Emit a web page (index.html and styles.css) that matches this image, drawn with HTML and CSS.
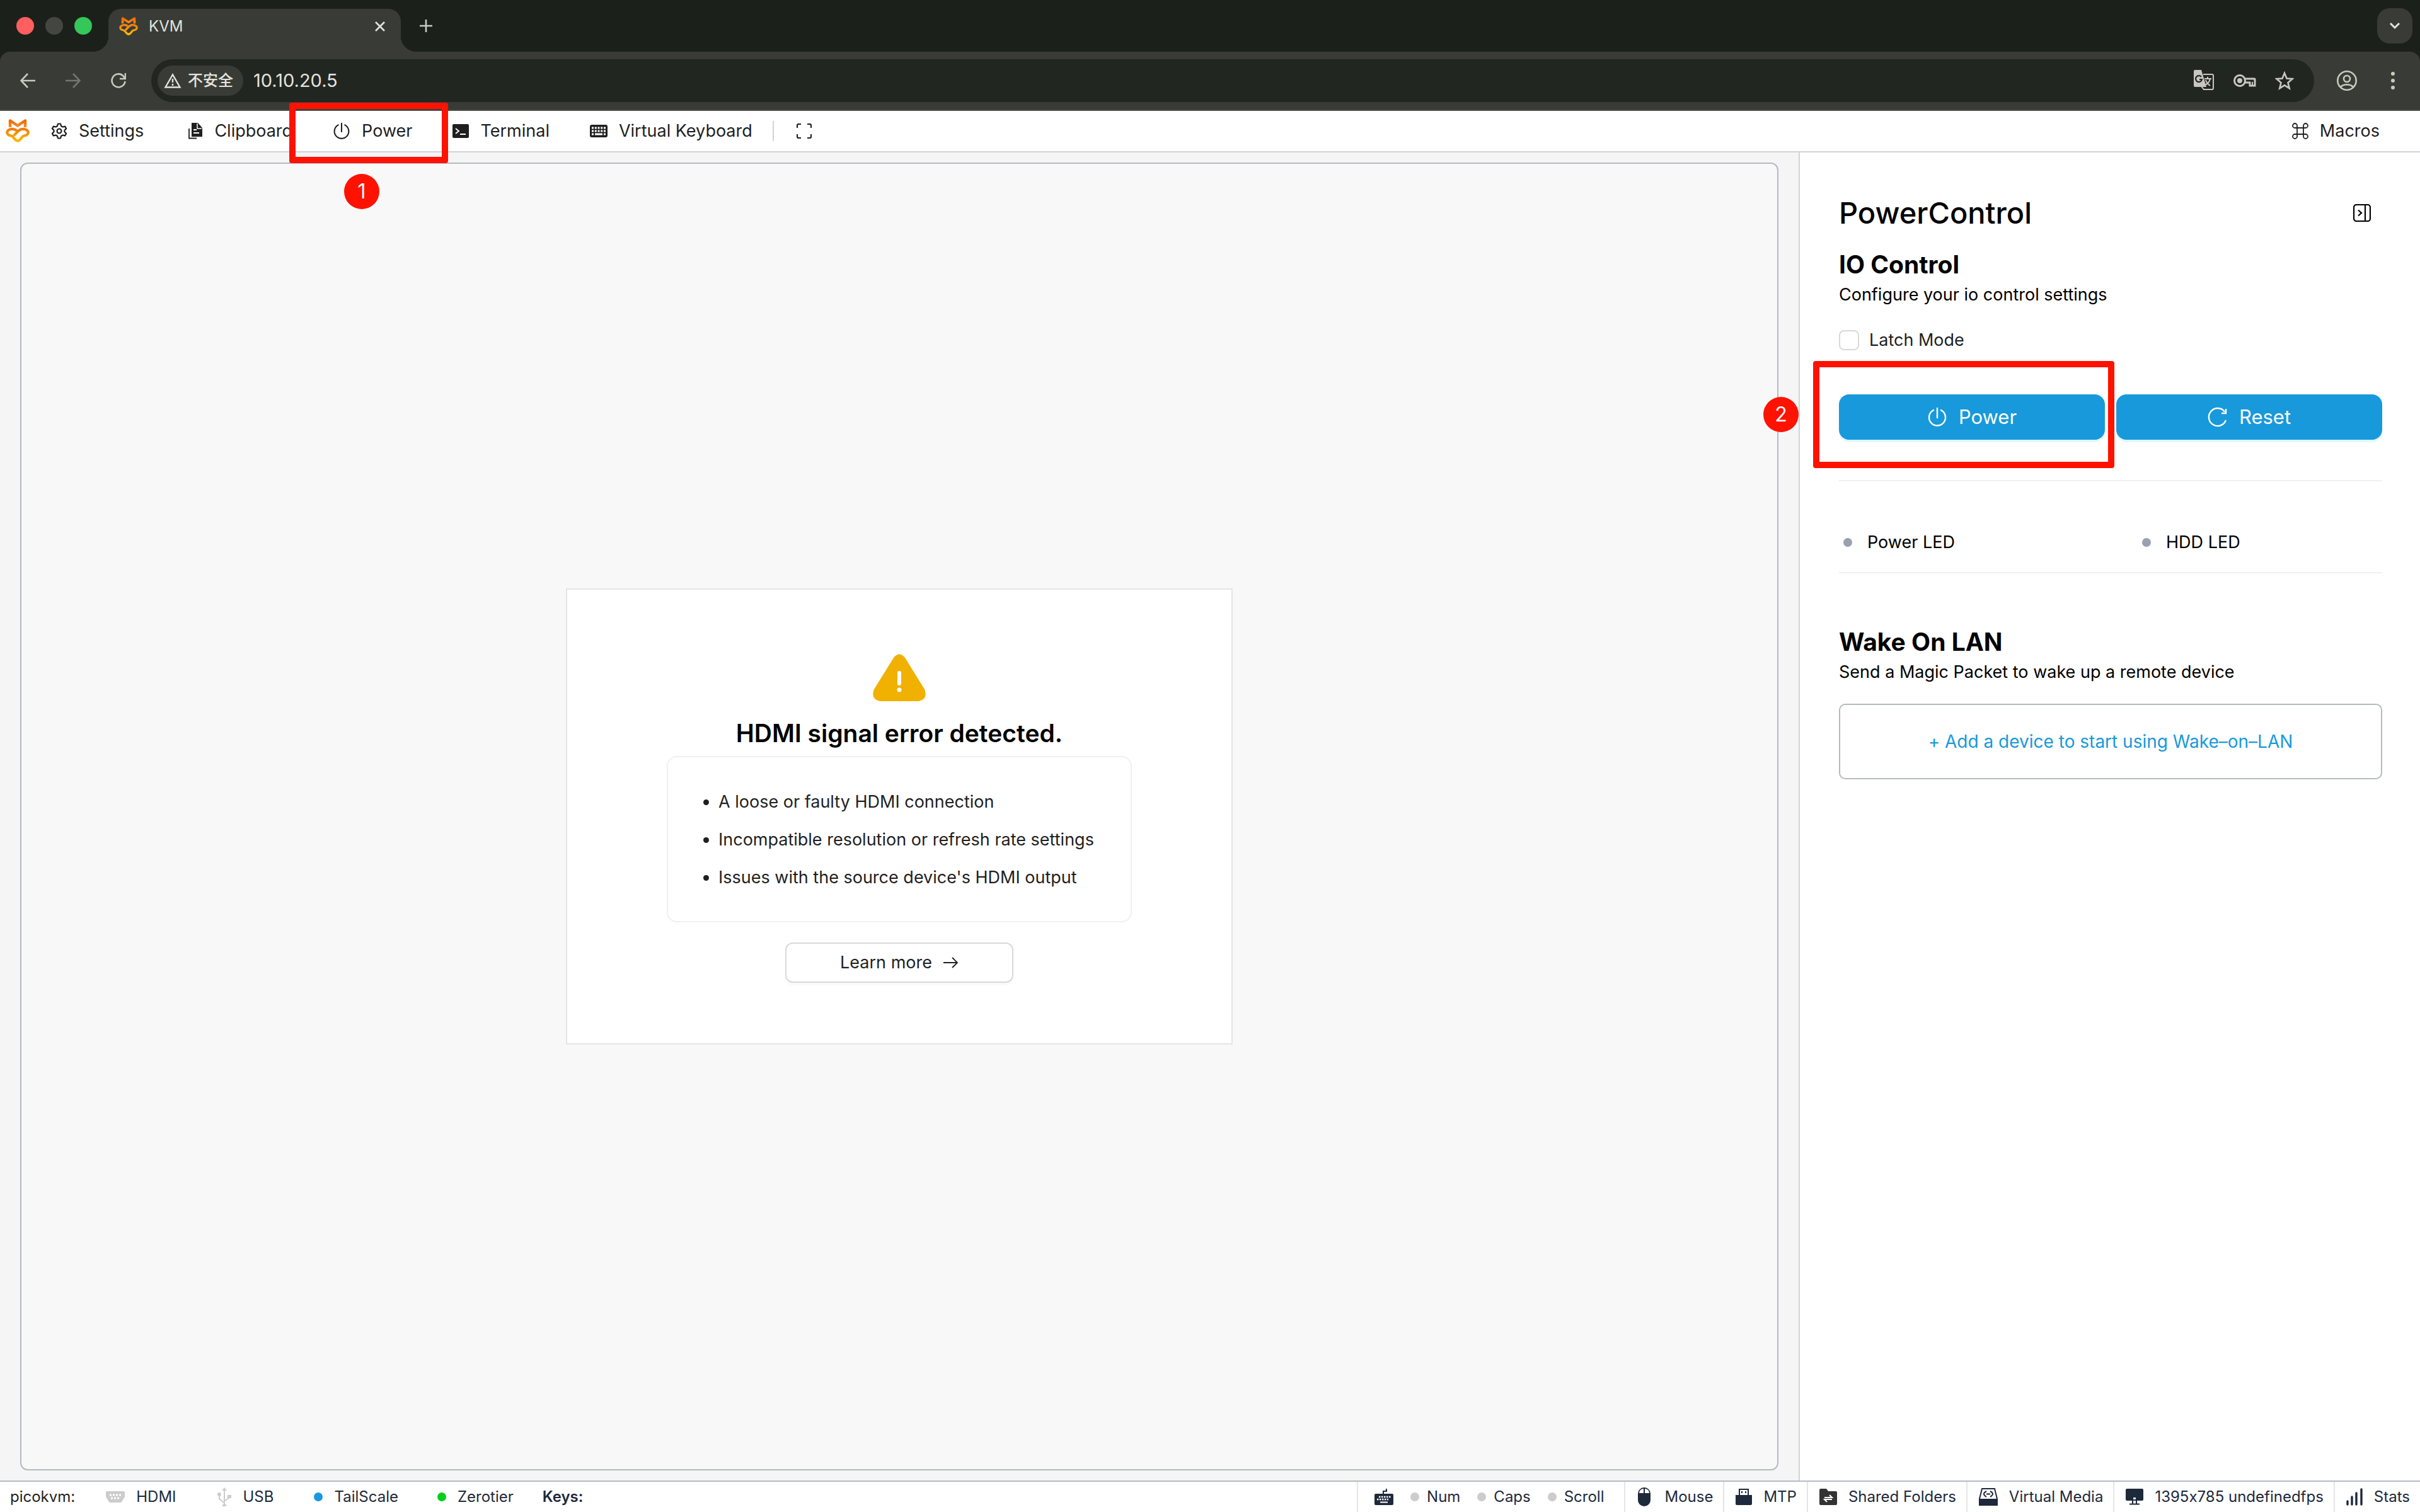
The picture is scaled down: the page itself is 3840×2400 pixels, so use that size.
FILE: index.html
```html
<!DOCTYPE html>
<html lang="en">
<head>
	<meta charset="utf-8">
	<title>KVM</title>
	<link rel="stylesheet" href="styles.css">
</head>

<body>

<!-- shared icons -->
<svg class="sprite" aria-hidden="true">
	<defs>
		<linearGradient id="fox" x1="0" y1="0" x2="0" y2="1">
			<stop offset="0" stop-color="#ef6a00"/>
			<stop offset="1" stop-color="#fb8f24"/>
		</linearGradient>
		<linearGradient id="fox2" x1="0" y1="0" x2="0" y2="1">
			<stop offset="0" stop-color="#ee7d10"/>
			<stop offset="1" stop-color="#ffb800"/>
		</linearGradient>
		<symbol id="logo" viewBox="0 0 38 38">
			<path d="M7 13V2.500l12 8 12-8V13" fill="none" stroke="url(#fox)" stroke-width="4.400" stroke-linejoin="round"/>
			<path d="M19 20C14 14 5 15 2.500 20c-1 4 2 6 6 6.500C13 27 14 34.500 19 34.500s6-7.500 10.500-8c4-.5 7-2.500 6-6.500C33 15 24 14 19 20zl-5 5" fill="none" stroke="url(#fox2)" stroke-width="4.200" stroke-linejoin="round" stroke-linecap="round"/>
		</symbol>
		<symbol id="power" viewBox="0 0 32 32">
			<path d="M16 2v15M10 5a13 13 0 1 0 12 0" fill="none" stroke="currentColor" stroke-width="2.4" stroke-linecap="round"/>
		</symbol>
	</defs>
</svg>

<div class="browser">
	<div class="tabstrip">
		<div class="lights"><i class="red"></i><i class="grey"></i><i class="green"></i></div>
		<div class="tab">
			<svg class="favicon"><use href="#logo"/></svg>
			<span class="tab-title">KVM</span>
			<button class="plain" aria-label="Close tab"><svg width="18" height="18" viewBox="0 0 18 18"><path d="M2 2l14 14M16 2L2 16" stroke="#e3e3de" stroke-width="2.6"/></svg></button>
		</div>
		<button class="plain new-tab" aria-label="New tab"><svg width="20" height="20" viewBox="0 0 20 20"><path d="M10 0v20M0 10h20" stroke="#c7cbbf" stroke-width="2.6"/></svg></button>
		<button class="tab-search" aria-label="Search tabs"><svg width="18" height="12" viewBox="0 0 18 12"><path d="M2 2l7 7 7-7" fill="none" stroke="#e3e3de" stroke-width="3"/></svg></button>
	</div>

	<div class="browser-bar">
		<button class="plain nav" aria-label="Back"><svg width="24" height="24" viewBox="0 0 24 24"><path d="M24 12H2M12 1L1.500 12 12 23" fill="none" stroke="#c7cbbf" stroke-width="2.6"/></svg></button>
		<button class="plain nav" aria-label="Forward"><svg width="24" height="24" viewBox="0 0 24 24"><path d="M0 12h22M12 1l10.500 11L12 23" fill="none" stroke="#73776f" stroke-width="2.6"/></svg></button>
		<button class="plain nav" aria-label="Reload"><svg width="24" height="24" viewBox="0 0 24 24"><path d="M22.500 13a10.500 10.500 0 1 1-3-8.500L22 8M23 0v9h-9" fill="none" stroke="#c7cbbf" stroke-width="2.6"/></svg></button>
		<div class="omnibox">
			<button class="chip"><svg width="28" height="24" viewBox="0 0 28 24"><path d="M14 2.500L2.500 22.500h23z" fill="none" stroke="#e3e3de" stroke-width="2.4"/><path d="M14 9v6M14 17v3" stroke="#e3e3de" stroke-width="2.4"/></svg>不安全</button>
			<input class="address" type="text" aria-label="Address" value="10.10.20.5">
			<button class="plain" aria-label="Translate"><svg width="34" height="34" viewBox="0 0 34 34"><path d="M16 7h14a2 2 0 0 1 2 2v20a2 2 0 0 1-2 2H17l-4-5" fill="none" stroke="#c9c6c2" stroke-width="2"/><path d="M3 0h10l8 27H3a2 2 0 0 1-2-2V2a2 2 0 0 1 2-2z" fill="#c9c6c2"/><path d="M13 11a5 5 0 1 0 1 4h-4" fill="none" stroke="#222621" stroke-width="2.2"/><path d="M18 14h11M23 11v3M27 14c-1 5-4 8-8 10M20 16c1 4 4 7 7 9" fill="none" stroke="#c9c6c2" stroke-width="2"/></svg></button>
			<button class="plain" aria-label="Passwords"><svg width="36" height="22" viewBox="0 0 36 22"><path d="M17.500 8H33a1 1 0 0 1 1 1v10h-8v-5h-8.500" fill="none" stroke="#c9c6c2" stroke-width="3"/><path d="M30 13v5" stroke="#c9c6c2" stroke-width="2"/><circle cx="10" cy="11" r="8.500" fill="none" stroke="#c9c6c2" stroke-width="3"/><circle cx="10" cy="11" r="4" fill="#c9c6c2"/></svg></button>
			<button class="plain" aria-label="Bookmark"><svg width="30" height="30" viewBox="0 0 30 30"><path d="M15 3l3.500 8.500 9 .7-7 6 2.200 9L15 22.300l-7.700 4.900 2.200-9-7-6 9-.7z" fill="none" stroke="#c9c6c2" stroke-width="2.6"/></svg></button>
		</div>
		<button class="plain" aria-label="Profile"><svg width="32" height="32" viewBox="0 0 32 32" fill="none" stroke="#c5cbbd" stroke-width="2.6"><circle cx="16" cy="16" r="14.700"/><circle cx="16" cy="13" r="5"/><path d="M6 26c5-5 15-5 20 0"/></svg></button>
		<button class="plain menu" aria-label="Menu"><svg width="6" height="28" viewBox="0 0 6 28" fill="#c5cbbd"><circle cx="3" cy="3" r="3"/><circle cx="3" cy="14" r="3"/><circle cx="3" cy="25" r="3"/></svg></button>
	</div>
</div>

<div class="toolbar">
	<svg class="logo"><use href="#logo"/></svg>
	<button class="tool settings"><svg width="26" height="26" viewBox="0 0 26 26" fill="none" stroke="#1f1f1f" stroke-width="2.2" stroke-linejoin="round"><path d="M11 1.500h4l1 3.500 2.500 1.500 3.600-.9 2 3.500-2.600 2.600v2.600l2.600 2.600-2 3.500-3.600-.9L16 21l-1 3.500h-4L10 21l-2.500-1.500-3.600.9-2-3.500 2.600-2.600v-2.600L1.900 9.100l2-3.500 3.600.9L10 5z"/><circle cx="13" cy="13" r="3.500"/></svg>Settings</button>
	<button class="tool"><svg width="24" height="26" viewBox="0 0 24 26"><path d="M6 0h10l7 8v14H6z" fill="#1f1f1f"/><path d="M15 1v8h7" fill="none" stroke="#fff" stroke-width="1.500"/><path d="M9 11h5M9 16h9" stroke="#fff" stroke-width="1.800"/><path d="M2 9v15.500h12" fill="none" stroke="#1f1f1f" stroke-width="1.800"/></svg>Clipboard</button>
	<div class="marked">
		<button class="tool"><svg width="28" height="28"><use href="#power"/></svg>Power</button>
		<span class="mark-box"></span>
		<span class="step">1</span>
	</div>
	<button class="tool"><svg width="26" height="22" viewBox="0 0 26 22"><rect width="26" height="22" rx="2" fill="#1f1f1f"/><path d="M5 7l5 4-5 4M12 16h9" fill="none" stroke="#fff" stroke-width="1.800"/></svg>Terminal</button>
	<button class="tool keys"><svg width="28" height="20" viewBox="0 0 28 20"><rect width="28" height="20" rx="3" fill="#1f1f1f"/><path d="M3 5h22M3 10h22" stroke="#fff" stroke-width="3" stroke-dasharray="3 1.750"/><path d="M3 15h3M8 15h12M22 15h3" stroke="#fff" stroke-width="3"/></svg>Virtual Keyboard</button>
	<span class="split"></span>
	<button class="tool" aria-label="Fullscreen"><svg width="24" height="24" viewBox="0 0 24 24"><path d="M1 7V3q0-2 2-2h4M17 1h4q2 0 2 2v4M23 17v4q0 2-2 2h-4M7 23H3q-2 0-2-2v-4" fill="none" stroke="#1f1f1f" stroke-width="2.200"/></svg></button>
	<button class="tool macros"><svg width="26" height="26" viewBox="0 0 26 26"><path d="M8 8V4.500A3.500 3.500 0 1 0 4.500 8h17A3.500 3.500 0 1 0 18 4.500v17a3.500 3.500 0 1 0 3.500-3.500h-17A3.500 3.500 0 1 0 8 21.500z" fill="none" stroke="#1f1f1f" stroke-width="1.800"/></svg>Macros</button>
</div>

<div class="content">
	<div class="stage">
		<div class="video">
			<div class="card">
				<svg width="84" height="76" viewBox="0 0 84 76"><path d="M33 6q9-11 18 0l31 50q6 16-9 19H11q-15-3-9-19z" fill="#f0b100"/><path d="M42 30v17" stroke="#fff" stroke-width="6" stroke-linecap="round"/><circle cx="42" cy="57" r="3.500" fill="#fff"/></svg>
				<h3>HDMI signal error detected.</h3>
				<ul>
					<li>A loose or faulty HDMI connection</li>
					<li>Incompatible resolution or refresh rate settings</li>
					<li>Issues with the source device's HDMI output</li>
				</ul>
				<button class="learn">Learn more<svg width="24" height="18" viewBox="0 0 24 18"><path d="M0 9h22M14 1l8 8-8 8" fill="none" stroke="#1f1f1f" stroke-width="1.800"/></svg></button>
			</div>
		</div>
	</div>

	<div class="sidebar">
		<div class="side-head">
			<h1>PowerControl</h1>
			<button class="plain" aria-label="Collapse"><svg width="28" height="28" viewBox="0 0 28 28" fill="none" stroke="#000" stroke-width="2.200"><rect x="1" y="1" width="26" height="26" rx="4"/><path d="M19 1v26M8 9.500l5 4.500-5 4.500"/></svg></button>
		</div>
		<h2>IO Control</h2>
		<p>Configure your io control settings</p>
		<label class="latch"><input type="checkbox">Latch Mode</label>
		<div class="actions">
			<div class="marked">
				<button class="action"><svg width="32" height="32"><use href="#power"/></svg>Power</button>
				<span class="mark-box"></span>
				<span class="step">2</span>
			</div>
			<button class="action"><svg width="32" height="32" viewBox="0 0 32 32"><path d="M29 21A14 14 0 1 1 27 7.500M29 3v7h-7" fill="none" stroke="#fff" stroke-width="2.400"/></svg>Reset</button>
		</div>
		<div class="leds">
			<div class="led"><i></i>Power LED</div>
			<div class="led"><i></i>HDD LED</div>
		</div>
		<h2>Wake On LAN</h2>
		<p>Send a Magic Packet to wake up a remote device</p>
		<button class="add">+ Add a device to start using Wake–on–LAN</button>
	</div>
</div>

<div class="footer">
	<span class="host">picokvm:</span>
	<span class="state"><svg width="30" height="18" viewBox="0 0 30 18"><path d="M2 0h26q2 0 2 2v7l-5 8q-1 1-2 1H7q-1 0-2-1L0 9V2q0-2 2-2z" fill="#ccc"/><path d="M6 6h18M8 11h14" stroke="#fff" stroke-width="3" stroke-dasharray="3 2"/></svg>HDMI</span>
	<span class="state"><svg width="24" height="30" viewBox="0 0 24 30" fill="none" stroke="#ccc" stroke-width="2"><path d="M12 28V3M12 25l-8-7v-6M12 22l8-6v-3"/><path d="M12 0l4 5H8z" fill="#ccc" stroke="none"/><circle cx="4" cy="11" r="3" fill="#ccc" stroke="none"/><path d="M17 12h6v5h-6zM9 27h6v3H9z" fill="#ccc" stroke="none"/></svg>USB</span>
	<span class="state"><i class="dot blue"></i>TailScale</span>
	<span class="state"><i class="dot green"></i>Zerotier</span>
	<b class="keys-label">Keys:</b>
	<div class="cells">
		<div class="cell locks">
			<svg width="30" height="26" viewBox="0 0 30 26"><path d="M14 8V4h5V0" fill="none" stroke="#1e293b" stroke-width="2"/><rect y="8" width="30" height="18" rx="2" fill="#1e293b"/><path d="M7 13h19M4 17h18" stroke="#fff" stroke-width="2.500" stroke-dasharray="2.500 1.500"/><path d="M9 21.500h12" stroke="#fff" stroke-width="2"/></svg>
			<span><i class="dot"></i>Num</span>
			<span><i class="dot"></i>Caps</span>
			<span><i class="dot"></i>Scroll</span>
		</div>
		<div class="cell mouse"><svg width="20" height="30" viewBox="0 0 20 30"><rect width="20" height="30" rx="10" fill="#1e293b"/><path d="M9 2v7H2q0-6 7-7zM11 2v7h7q0-6-7-7z" fill="#fff"/></svg>Mouse</div>
		<div class="cell"><svg width="26" height="26" viewBox="0 0 26 26"><path d="M6 11V1h14v10" fill="#fff" stroke="#1e293b" stroke-width="2"/><path d="M9 4h2v3H9zM15 4h2v3h-2zM0 10h26v14q0 2-2 2H2q-2 0-2-2z" fill="#1e293b"/></svg>MTP</div>
		<div class="cell"><svg width="28" height="26" viewBox="0 0 28 26"><path d="M2 0h9l3 4h12q2 0 2 2v18q0 2-2 2H2q-2 0-2-2V2q0-2 2-2z" fill="#333"/><path d="M8 14h12l-4-4M20 17H8l4 4" fill="none" stroke="#fff" stroke-width="2"/></svg>Shared Folders</div>
		<div class="cell"><svg width="30" height="28" viewBox="0 0 30 28"><path d="M5 1h20l4 16v10H1V17z" fill="#fff" stroke="#1e293b" stroke-width="2"/><path d="M0 17h30v11H0z" fill="#1e293b"/><path d="M12 5q-8 4 0 9M18 5q8 4 0 9M12 9.500h6" fill="none" stroke="#1e293b" stroke-width="2"/></svg>Virtual Media</div>
		<div class="cell"><svg width="28" height="26" viewBox="0 0 28 26"><rect width="28" height="19" rx="2" fill="#1e293b"/><path d="M12 14h4v3h-4z" fill="#fff"/><path d="M11 19v5M17 19v5M6 24.500h16" stroke="#1e293b" stroke-width="2"/></svg>1395x785 undefinedfps</div>
		<div class="cell"><svg width="26" height="28" viewBox="0 0 26 28"><path d="M2 21v5M9 14v12M16 8v18M24 2v24" stroke="#1e293b" stroke-width="3.400" stroke-linecap="round"/></svg>Stats</div>
	</div>
</div>

</body>
</html>
```
FILE: styles.css
```css
*{
	box-sizing: border-box;
}
body{
	margin: 0;
	min-height: 100vh;
	display: flex;
	flex-direction: column;
	background: #fff;
	color: #1f1f1f;
	font-family: Inter, "Noto Sans CJK SC", sans-serif;
	font-size: 27px;
	line-height: 36px;
	font-feature-settings: "calt" 0;
}
button{
	font: inherit;
	color: inherit;
	cursor: pointer;
}
svg{
	flex: none;
	display: block;
}
h1, h2, h3, p, ul{
	margin: 0;
}
.sprite{
	position: absolute;
	width: 0;
	height: 0;
}
.plain{
	display: flex;
	padding: 0;
	border: 0;
	background: none;
}

/* browser window */
.browser{
	background: #1c201b;
}
.tabstrip{
	display: flex;
	align-items: center;
	height: 82px;
	padding: 0 12px 0 26px;
}
.lights{
	display: flex;
	gap: 18px;
	margin-right: 26px;
}
.lights i{
	width: 28px;
	height: 28px;
	border-radius: 50%;
}
.lights .red{
	background: #ff5f5f;
}
.lights .grey{
	background: #434641;
}
.lights .green{
	background: #34c759;
}
.tab{
	position: relative;
	display: flex;
	align-items: center;
	align-self: flex-end;
	width: 464px;
	height: 68px;
	padding: 0 24px 12px 16px;
	border-radius: 20px 20px 0 0;
	background: #393c36;
	color: #e3e3de;
	font-size: 24px;
}
/* curved feet of the tab */
.tab::before, .tab::after{
	content: "";
	position: absolute;
	bottom: 0;
	width: 24px;
	height: 24px;
}
.tab::before{
	right: 100%;
	background: radial-gradient(circle at 0 0, #1c201b 24px, #393c36 24px);
}
.tab::after{
	left: 100%;
	background: radial-gradient(circle at 100% 0, #1c201b 24px, #393c36 24px);
}
.favicon{
	width: 32px;
	height: 30px;
	margin-right: 16px;
}
.tab-title{
	flex: 1;
}
.new-tab{
	margin-left: 30px;
}
.tab-search{
	display: flex;
	align-items: center;
	justify-content: center;
	width: 56px;
	height: 56px;
	margin-left: auto;
	border: 0;
	border-radius: 20px;
	background: #393c36;
}
.browser-bar{
	display: flex;
	align-items: center;
	height: 94px;
	padding: 0 40px 0 32px;
	border-bottom: 2px solid #4a4a46;
	border-radius: 16px 16px 0 0;
	background: #393c36;
}
.nav{
	margin-right: 48px;
}
.nav + .nav + .nav{
	margin-right: 40px;
}
.omnibox{
	flex: 1;
	display: flex;
	align-items: center;
	gap: 30px;
	height: 68px;
	margin-right: 36px;
	padding: 0 32px 0 10px;
	border-radius: 34px;
	background: #222621;
	color: #e3e3de;
}
.chip{
	display: flex;
	align-items: center;
	gap: 10px;
	height: 48px;
	padding: 0 16px 0 10px;
	border: 0;
	border-radius: 24px;
	background: #393c36;
	font-size: 24px;
	font-weight: 500;
}
.address{
	flex: 1;
	margin-left: -14px;
	padding: 0;
	border: 0;
	outline: 0;
	background: none;
	color: inherit;
	font: inherit;
	font-size: 29px;
}
.menu{
	margin-left: 54px;
}

/* app toolbar */
.toolbar{
	display: flex;
	align-items: center;
	height: 66px;
	padding: 0 64px 0 9px;
	border-bottom: 2px solid #d1d3da;
}
.logo{
	width: 38px;
	height: 38px;
	margin-right: 34px;
}
.tool{
	display: flex;
	align-items: center;
	gap: 18px;
	margin-right: 64px;
	padding: 0;
	border: 0;
	background: none;
}
.settings{
	margin-right: 70px;
}
.keys{
	margin-right: 32px;
}
.split{
	width: 2px;
	height: 32px;
	margin-right: 36px;
	background: #cbd5e1;
}
.macros{
	margin: 0 0 0 auto;
}
.marked{
	position: relative;
}
.mark-box{
	position: absolute;
	z-index: 2;
	border: 10px solid #ff1200;
	border-radius: 4px;
	pointer-events: none;
}
.step{
	position: absolute;
	z-index: 2;
	width: 56px;
	height: 56px;
	border-radius: 50%;
	background: #ff1200;
	color: #fff;
	font-size: 32px;
	line-height: 56px;
	text-align: center;
}
.toolbar .mark-box{
	left: -69px;
	top: -27px;
	width: 252px;
	height: 96px;
}
.toolbar .step{
	left: 18px;
	top: 86px;
}

/* main area */
.content{
	flex: 1;
	display: flex;
}
.stage{
	flex: 1;
	display: flex;
	padding: 16px 32px;
	background: #f5f5f5;
}
.video{
	flex: 1;
	display: flex;
	align-items: center;
	justify-content: center;
	border: 2px solid #b4b9c2;
	border-radius: 12px;
	background: #f8f8f8;
}
.card{
	display: flex;
	flex-direction: column;
	align-items: center;
	padding: 102px 158px 96px;
	border: 2px solid #e5e5e5;
	background: #fff;
}
.card h3{
	margin: 26px 0 12px;
	color: #000;
	font-size: 39px;
	font-weight: 600;
	line-height: 48px;
}
.card ul{
	width: 738px;
	padding: 41px 0 39px 80px;
	border: 2px solid #f0f0f0;
	border-radius: 16px;
	line-height: 60px;
}
.learn{
	display: flex;
	align-items: center;
	justify-content: center;
	gap: 18px;
	width: 362px;
	height: 64px;
	margin-top: 32px;
	border: 2px solid #d9d9d9;
	border-radius: 12px;
	background: #fff;
	box-shadow: 0 4px 0 #fafafa;
}

/* right panel */
.sidebar{
	width: 986px;
	padding: 62px 60px 0 62px;
	border-left: 2px solid #d1d3d6;
	color: #000;
}
.side-head{
	display: flex;
	align-items: center;
	justify-content: space-between;
	height: 68px;
	padding-right: 18px;
}
.sidebar h1{
	font-size: 47px;
	font-weight: 500;
}
.sidebar h2{
	margin-top: 24px;
	font-size: 39px;
	font-weight: 700;
	line-height: 48px;
}
.sidebar p{
	margin-top: 6px;
}
.latch{
	display: flex;
	align-items: center;
	gap: 16px;
	margin-top: 36px;
	color: #1f1f1f;
}
.latch input{
	appearance: none;
	width: 32px;
	height: 32px;
	margin: 0;
	border: 2px solid #d9d9d9;
	border-radius: 8px;
	background: #fff;
}
.actions{
	display: grid;
	grid-template-columns: 1fr 1fr;
	gap: 18px;
	margin-top: 68px;
	padding-bottom: 64px;
	border-bottom: 2px solid #f0f0f0;
}
.action{
	display: flex;
	align-items: center;
	justify-content: center;
	gap: 18px;
	width: 100%;
	height: 72px;
	border: 0;
	border-radius: 16px;
	background: #1899db;
	box-shadow: 0 4px 0 #e3f8ff;
	color: #fff;
	font-size: 31px;
}
.actions .mark-box{
	left: -41px;
	top: -53px;
	width: 478px;
	height: 170px;
}
.actions .step{
	left: -120px;
	top: 4px;
}
.leds{
	display: grid;
	grid-template-columns: 474px 1fr;
	padding: 79px 0 29px 7px;
	border-bottom: 2px solid #f0f0f0;
}
.led{
	display: flex;
	align-items: center;
	gap: 24px;
}
.led i, .dot{
	flex: none;
	width: 14px;
	height: 14px;
	border-radius: 50%;
	background: #99a1af;
}
.leds + h2{
	margin-top: 85px;
}
.add{
	display: block;
	width: 100%;
	height: 120px;
	margin-top: 32px;
	border: 2px solid #b4b9c2;
	border-radius: 10px;
	background: #fff;
	color: #1899db;
	font-size: 28px;
}

/* status bar */
.footer{
	display: flex;
	align-items: center;
	height: 50px;
	padding-left: 16px;
	border-top: 2px solid #b4b9c2;
	color: #1e293b;
	font-size: 24px;
}
.host{
	margin-right: 49px;
	color: #1f1f1f;
}
.state{
	display: flex;
	align-items: center;
	gap: 18px;
	margin-right: 64px;
}
.state:nth-of-type(4){
	margin-right: 62px;
}
.state:nth-of-type(5){
	margin-right: 46px;
}
.dot{
	background: #ccc;
}
.dot.blue{
	background: #1899db;
}
.dot.green{
	background: #00d01c;
}
.keys-label{
	font-weight: 600;
}
.cells{
	display: flex;
	align-self: stretch;
	margin-left: auto;
}
.cell{
	display: flex;
	align-items: center;
	gap: 18px;
	padding: 0 16px 0 18px;
	border-left: 2px solid #e5e5e5;
}
.locks{
	gap: 27px;
	padding: 0 32px 0 26px;
}
.locks span{
	display: flex;
	align-items: center;
	gap: 12px;
}
.mouse{
	gap: 22px;
	padding-left: 20px;
}
```
